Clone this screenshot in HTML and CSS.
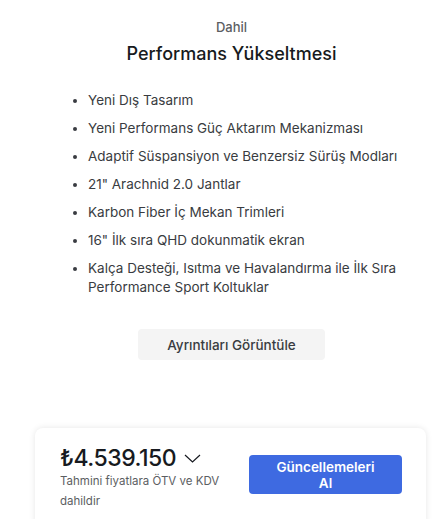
FILE: index.html
```html
<!DOCTYPE html>
<html lang="tr">
<head>
    <meta charset="UTF-8">
    <meta name="viewport" content="width=device-width, initial-scale=1.0">
    <title>Performans Yükseltmesi</title>
    <link rel="stylesheet" href="styles.css">
</head>
<body>
    <div class="upgrade">
        <p class="upgrade-label">Dahil</p>
        <h1 class="upgrade-title">Performans Yükseltmesi</h1>

        <ul class="feature-list">
            <li>Yeni Dış Tasarım</li>
            <li>Yeni Performans Güç Aktarım Mekanizması</li>
            <li>Adaptif Süspansiyon ve Benzersiz Sürüş Modları</li>
            <li>21" Arachnid 2.0 Jantlar</li>
            <li>Karbon Fiber İç Mekan Trimleri</li>
            <li>16" İlk sıra QHD dokunmatik ekran</li>
            <li>Kalça Desteği, Isıtma ve Havalandırma ile İlk Sıra Performance Sport Koltuklar</li>
        </ul>

        <button class="details-btn">Ayrıntıları Görüntüle</button>
    </div>

    <div class="price-card">
        <div class="price-info">
            <div class="price-row">
                <span class="price">₺4.539.150</span>
                <svg class="chevron" width="17" height="9" viewBox="0 0 17 9">
                    <path d="M1 1 L8.5 8 L16 1" fill="none" stroke="#171a20" stroke-width="1.2"/>
                </svg>
            </div>
            <p class="price-note">Tahmini fiyatlara ÖTV ve KDV dahildir</p>
        </div>
        <button class="updates-btn">Güncellemeleri Al</button>
    </div>
</body>
</html>
```

FILE: styles.css
```css
body {
    font-family: Inter, "Noto Sans", sans-serif;
    background-color: #ffffff;
    color: #171a20;
    margin: 0;
    overflow: hidden;
}
.upgrade {
    display: flex;
    flex-direction: column;
    align-items: center;
    padding: 18px 0 0 16px;
}
.upgrade-label {
    margin: 0;
    font-size: 13px;
    font-weight: 500;
    line-height: 18px;
    color: #5c5e62;
}
.upgrade-title {
    margin: 5px 0 0;
    font-size: 18px;
    font-weight: 500;
    line-height: 26px;
    color: #171a20;
}
.feature-list {
    align-self: stretch;
    margin: 24px 0 0;
    padding: 0 40px 0 72px;
    font-size: 13.5px;
    line-height: 19px;
    color: #393c41;
}
.feature-list li {
    margin-bottom: 9px;
}
.feature-list li::marker {
    font-size: 12px;
}
.details-btn {
    margin-top: 23px;
    width: 187px;
    height: 31px;
    border: none;
    border-radius: 4px;
    background: #f4f4f4;
    font-family: inherit;
    font-size: 13.5px;
    font-weight: 500;
    color: #393c41;
}
.price-card {
    display: flex;
    align-items: center;
    justify-content: space-between;
    margin: 68px 21px 0 35px;
    padding: 12px 24px 14px 25px;
    height: 100px;
    box-sizing: border-box;
    border-radius: 8px;
    background: #ffffff;
    box-shadow: 0 0 6px rgba(0, 0, 0, 0.1);
}
.price-row {
    display: flex;
    align-items: center;
    gap: 8px;
}
.price {
    font-size: 23px;
    font-weight: 500;
    letter-spacing: -0.5px;
    line-height: 30px;
    color: #171a20;
}
.price-note {
    margin: -2px 0 0;
    width: 175px;
    font-size: 11.5px;
    line-height: 20px;
    color: #5c5e62;
}
.updates-btn {
    width: 153px;
    height: 39px;
    margin-top: -6px;
    border: none;
    border-radius: 4px;
    background: #3e6ae1;
    font-family: inherit;
    font-size: 13.5px;
    font-weight: 600;
    line-height: 16px;
    color: #ffffff;
    padding: 2px 20px 0;
}
```
